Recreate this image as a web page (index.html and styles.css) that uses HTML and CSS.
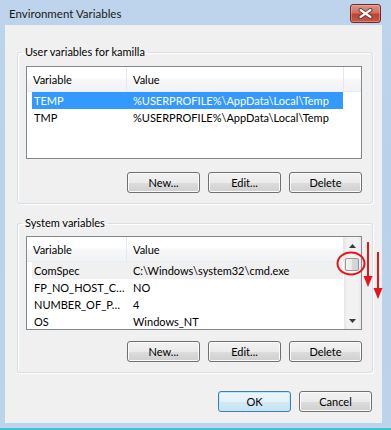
FILE: index.html
```html
<!DOCTYPE html>
<html lang="en">
<head>
    <meta charset="UTF-8">
    <title>Environment Variables</title>
    <link rel="stylesheet" href="styles.css">
</head>
<body>

<div class="window">
    <div class="titlebar">
        <span class="title">Environment Variables</span>
        <button class="close" type="button">
            <svg width="15" height="11" viewBox="0 0 15 11">
                <path d="M2.5 2 L12.5 9 M12.5 2 L2.5 9" stroke="#4a2020" stroke-width="3.8" stroke-linecap="round"/>
                <path d="M2.5 2 L12.5 9 M12.5 2 L2.5 9" stroke="#fff" stroke-width="2.2" stroke-linecap="round"/>
            </svg>
        </button>
    </div>

    <div class="client">
        <fieldset class="group group-user">
            <legend>User variables for kamilla</legend>
            <div class="list">
                <div class="list-body">
                    <div class="header">
                        <div class="hcell col-name">Variable</div>
                        <div class="hcell col-value">Value</div>
                        <div class="hcell col-fill"></div>
                    </div>
                    <div class="row selected">
                        <div class="cell name">TEMP</div>
                        <div class="cell value">%USERPROFILE%\AppData\Local\Temp</div>
                    </div>
                    <div class="row">
                        <div class="cell name">TMP</div>
                        <div class="cell value">%USERPROFILE%\AppData\Local\Temp</div>
                    </div>
                </div>
            </div>
            <div class="buttons">
                <button class="btn" type="button">New...</button>
                <button class="btn" type="button">Edit...</button>
                <button class="btn" type="button">Delete</button>
            </div>
        </fieldset>

        <fieldset class="group group-system">
            <legend>System variables</legend>
            <div class="list">
                <div class="list-body">
                    <div class="header">
                        <div class="hcell col-name">Variable</div>
                        <div class="hcell col-value">Value</div>
                    </div>
                    <div class="row inactive">
                        <div class="cell name">ComSpec</div>
                        <div class="cell value">C:\Windows\system32\cmd.exe</div>
                    </div>
                    <div class="row">
                        <div class="cell name">FP_NO_HOST_C…</div>
                        <div class="cell value">NO</div>
                    </div>
                    <div class="row">
                        <div class="cell name">NUMBER_OF_P…</div>
                        <div class="cell value">4</div>
                    </div>
                    <div class="row">
                        <div class="cell name">OS</div>
                        <div class="cell value">Windows_NT</div>
                    </div>
                </div>
                <div class="scrollbar">
                    <div class="arrow">
                        <svg width="7" height="4" viewBox="0 0 7 4"><path d="M0 4 L3.5 0 L7 4 Z" fill="#3a3a3a"/></svg>
                    </div>
                    <div class="thumb"></div>
                    <div class="track"></div>
                    <div class="arrow">
                        <svg width="7" height="4" viewBox="0 0 7 4"><path d="M0 0 L3.5 4 L7 0 Z" fill="#3a3a3a"/></svg>
                    </div>
                </div>
            </div>
            <div class="buttons">
                <button class="btn" type="button">New...</button>
                <button class="btn" type="button">Edit...</button>
                <button class="btn" type="button">Delete</button>
            </div>
        </fieldset>

        <div class="buttons dialog-buttons">
            <button class="btn default" type="button">OK</button>
            <button class="btn" type="button">Cancel</button>
        </div>
    </div>

    <!-- red marks drawn over the screenshot -->
    <svg class="marks" width="391" height="430" viewBox="0 0 391 430">
        <ellipse cx="351" cy="263.5" rx="13.5" ry="11" fill="none" stroke="#e3161c" stroke-width="2"/>
        <line x1="368" y1="242" x2="368" y2="278" stroke="#e3161c" stroke-width="2"/>
        <polygon points="363.5,276 372.5,276 368,287" fill="#e3161c"/>
        <line x1="378" y1="252" x2="378" y2="290" stroke="#e3161c" stroke-width="2"/>
        <polygon points="373.5,288 382.5,288 378,299" fill="#e3161c"/>
    </svg>
</div>

</body>
</html>
```

FILE: styles.css
```css
body {
    margin: 0;
    font-family: Lato, "Noto Sans", Arial, sans-serif;
    font-size: 11px;
    color: #000;
}
.window {
    position: relative;
    width: 391px;
    height: 430px;
    box-sizing: border-box;
    background: linear-gradient(#bdd4ec, #b9d1ea 40%, #bcd3ea);
    border-bottom: 2px solid #41c0d6;
    display: flex;
    flex-direction: column;
}
.titlebar {
    height: 25px;
    display: flex;
    align-items: flex-start;
    flex-shrink: 0;
}
.title {
    margin: 5px 0 0 9px;
    font-size: 11.5px;
    line-height: 17px;
    color: #1a1a1a;
}
.close {
    margin: 4px 10px 0 auto;
    width: 31px;
    height: 19px;
    padding: 0;
    border: 1px solid #6a2c2c;
    border-radius: 3px;
    background: linear-gradient(#dc9584, #d0705d 45%, #bf4232 55%, #c95a44);
    box-shadow: inset 0 0 0 1px rgba(255, 210, 200, 0.35);
    display: flex;
    align-items: center;
    justify-content: center;
}
.client {
    width: 377px;
    height: 398px;
    margin-left: 5px;
    box-sizing: border-box;
    padding: 19px 9px 0 12px;
    background-color: #f0f0f0;
}
.group {
    margin: 0;
    padding: 0 10px 10px 8px;
    border: 1px solid #d5dfe5;
    border-radius: 3px;
    box-shadow: inset 1px 1px #fff, 1px 1px #fff;
}
.group legend {
    margin-left: -4px;
    padding: 0 3px;
    line-height: 16px;
}
.group-system {
    margin-top: 11px;
}
.list {
    display: flex;
    width: 336px;
    box-sizing: border-box;
    border: 1px solid #828790;
    background-color: #fff;
    overflow: hidden;
}
.group-user .list {
    margin-top: 6px;
    height: 93px;
}
.group-system .list {
    margin-top: 5px;
    height: 94px;
}
.list-body {
    flex: 1;
    min-width: 0;
}
.header {
    display: flex;
    height: 25px;
    background: linear-gradient(#fff, #fff 45%, #f6f7f8 55%, #f2f3f5);
    border-bottom: 1px solid #e9ecf0;
    box-sizing: border-box;
}
.hcell {
    flex-shrink: 0;
    line-height: 25px;
    padding-left: 6px;
    box-sizing: border-box;
    border-right: 1px solid #e3e8ee;
}
.col-name {
    width: 100px;
}
.col-value {
    width: 217px;
}
.col-fill {
    flex: 1;
    border-right: none;
}
.row {
    display: flex;
    width: 311px;
    height: 17px;
    margin-left: 5px;
    line-height: 17px;
    white-space: nowrap;
    overflow: hidden;
}
.row.selected {
    background-color: #3399ff;
    color: #fff;
}
.row.inactive {
    background-color: #f0f0f0;
}
.cell.name {
    flex-shrink: 0;
    width: 94px;
    padding-left: 2px;
    box-sizing: border-box;
}
.cell.value {
    padding-left: 7px;
}
.scrollbar {
    width: 17px;
    flex-shrink: 0;
    display: flex;
    flex-direction: column;
    background: linear-gradient(90deg, #e6e6e6, #f2f2f2 20%, #f2f2f2 80%, #e9e9e9);
}
.arrow {
    height: 17px;
    display: flex;
    align-items: center;
    justify-content: center;
}
.thumb {
    width: 14px;
    height: 13px;
    margin: 4px 0 0 1px;
    box-sizing: border-box;
    border: 1px solid #979797;
    border-radius: 2px;
    background: linear-gradient(90deg, #f4f4f4, #e9e9e9 50%, #d8d8d8 51%, #d2d2d2);
}
.track {
    flex: 1;
}
.buttons {
    display: flex;
    justify-content: flex-end;
    gap: 8px;
    margin-top: 13px;
}
.group-system .buttons {
    margin-top: 11px;
}
.btn {
    width: 73px;
    height: 21px;
    padding: 0;
    font: inherit;
    color: #000;
    border: 1px solid #707070;
    border-radius: 3px;
    background: linear-gradient(#f2f2f2, #ebebeb 50%, #dddddd 51%, #cfcfcf);
    box-shadow: inset 0 0 0 1px #fbfbfb;
}
.btn.default {
    border-color: #3c7fb1;
    background: linear-gradient(#ecf6fc, #e2f1fa 50%, #d2e9f6 51%, #c8e3f3);
    box-shadow: inset 0 0 0 1px #c4e5f6;
}
.dialog-buttons {
    margin-top: 18px;
    margin-right: 1px;
}
.marks {
    position: absolute;
    left: 0;
    top: 0;
    pointer-events: none;
}
```
